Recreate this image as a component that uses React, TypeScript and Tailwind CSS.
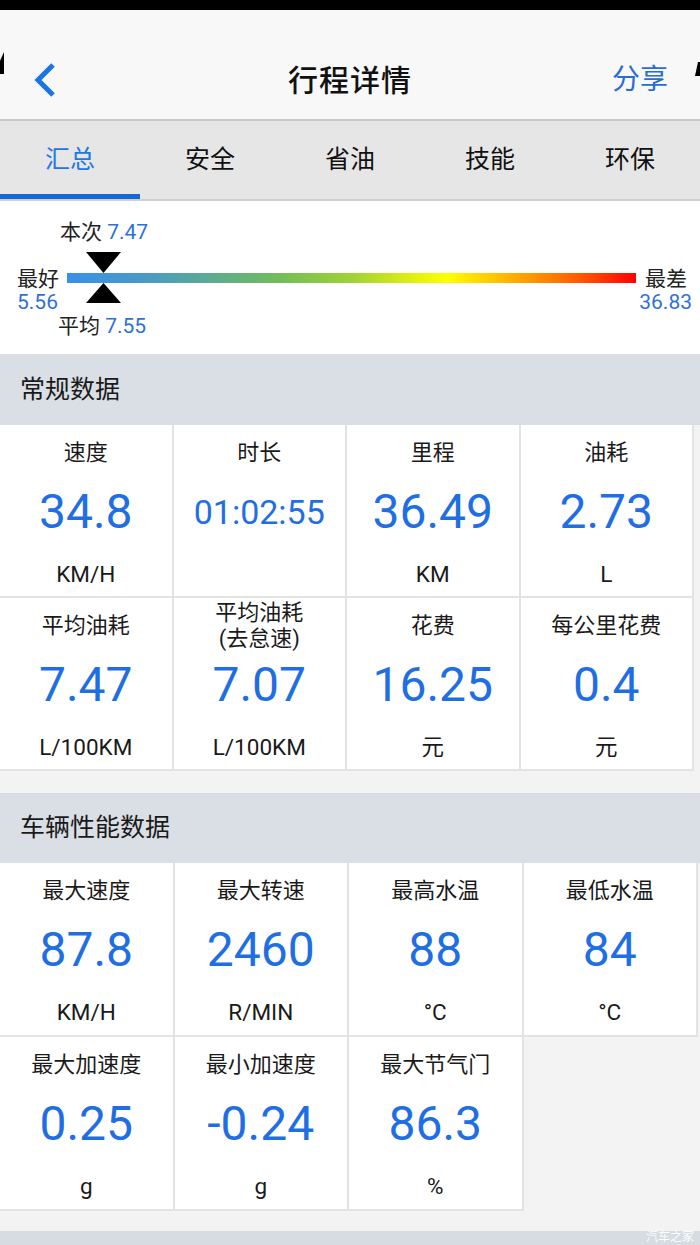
import React from "react";

const FONT = "font-[family-name:Roboto,'Noto_Sans_CJK_SC',sans-serif]";

type CellProps = { label: React.ReactNode; value?: string; unit?: string; small?: boolean; h: string };

function Cell({ label, value, unit, small, h }: CellProps) {
  return (
    <div className={`${h} border-r-2 border-b-2 border-[#e3e3e3] bg-white flex flex-col items-center`}>
      <div className="h-[56px] flex items-center justify-center text-center text-[22px] leading-[26px] text-[#1a1a1a]">
        {label}
      </div>
      <div
        className={`h-[62px] flex items-center justify-center text-[#1f6fe3] ${
          small ? "text-[34px]" : "text-[48px]"
        } leading-none`}
      >
        {value}
      </div>
      <div className="mt-[12px] h-[40px] flex items-center text-[22.5px] text-[#1a1a1a]">{unit}</div>
    </div>
  );
}

function SectionHeader({ title, h }: { title: string; h: string }) {
  return (
    <div className={`${h} bg-[#d9dfe5] flex items-center pl-[20px] text-[25px] text-[#1a1a1a]`}>{title}</div>
  );
}

export default function App() {
  const tabs = ["汇总", "安全", "省油", "技能", "环保"];
  const grid1 = [
    { label: "速度", value: "34.8", unit: "KM/H" },
    { label: "时长", value: "01:02:55", unit: "", small: true },
    { label: "里程", value: "36.49", unit: "KM" },
    { label: "油耗", value: "2.73", unit: "L" },
    { label: "平均油耗", value: "7.47", unit: "L/100KM" },
    {
      label: (
        <span>
          平均油耗
          <br />
          (去怠速)
        </span>
      ),
      value: "7.07",
      unit: "L/100KM",
    },
    { label: "花费", value: "16.25", unit: "元" },
    { label: "每公里花费", value: "0.4", unit: "元" },
  ];
  const grid2 = [
    { label: "最大速度", value: "87.8", unit: "KM/H" },
    { label: "最大转速", value: "2460", unit: "R/MIN" },
    { label: "最高水温", value: "88", unit: "°C" },
    { label: "最低水温", value: "84", unit: "°C" },
    { label: "最大加速度", value: "0.25", unit: "g" },
    { label: "最小加速度", value: "-0.24", unit: "g" },
    { label: "最大节气门", value: "86.3", unit: "%" },
  ];

  return (
    <div className={`${FONT} w-[700px] h-[1245px] overflow-hidden bg-[#f3f3f3] relative`}>
      {/* top black strip */}
      <div className="h-[10px] bg-black" />

      {/* nav header */}
      <div className="relative bg-[#f8f8f8] h-[111px] pt-[40px] border-b-2 border-[#c9c9c9]">
        <div className="absolute left-0 top-[42px] w-[4px] h-[22px] bg-black [clip-path:polygon(0_100%,100%_100%,100%_0,0_40%)]" />
        <div className="absolute right-0 top-[52px] w-[5px] h-[14px] bg-black [clip-path:polygon(0_100%,100%_100%,100%_0,60%_0)]" />
        <div className="h-[60px] flex items-center">
          <div className="w-[150px] pl-[30px] flex items-center">
            <svg width="28" height="36" viewBox="0 0 28 36">
              <path d="M23 3 L8 18 L23 33" fill="none" stroke="#1a74e8" strokeWidth="5" strokeLinecap="butt" />
            </svg>
          </div>
          <div className="flex-1 text-center text-[30px] font-medium text-[#111] tracking-[1px]">行程详情</div>
          <div className="w-[150px] pr-[32px] text-right text-[28px] text-[#2a6bd6]">分享</div>
        </div>
      </div>

      {/* tabs */}
      <div className="h-[80px] bg-[#e6e6e6] border-b-2 border-[#cfcfcf] flex">
        {tabs.map((t, i) => (
          <div key={t} className="w-[140px] flex flex-col">
            <div className="flex-1 pt-[5px] flex items-center justify-center">
              <span className={`text-[25px] ${i === 0 ? "text-[#2277e0]" : "text-[#111]"}`}>{t}</span>
            </div>
            <div className={`h-[5px] ${i === 0 ? "bg-[#1569d6]" : ""}`} />
          </div>
        ))}
      </div>

      {/* gauge */}
      <div className="h-[153px] bg-white text-[21px] leading-[24px] flex flex-col pt-[19px]">
        <div className="pl-[60px] text-[#222]">
          本次 <span className="text-[#2f6fd9]">7.47</span>
        </div>
        <div className="mt-[8px] h-[52px] flex items-start">
          <div className="w-[67px] pl-[17px] pt-[15px] flex flex-col">
            <span className="text-[#222]">最好</span>
            <span className="text-[#2f6fd9] -mt-[1px]">5.56</span>
          </div>
          <div className="w-[569px] flex flex-col">
            <svg className="ml-[19px]" width="35" height="21" viewBox="0 0 35 21">
              <polygon points="0,0 35,0 17.5,21" fill="#000" />
            </svg>
            <div className="h-[10px] bg-[linear-gradient(to_right,#3a8fe8_0%,#4a9cc0_15%,#74bd58_38%,#9fd236_50%,#e8f20e_62%,#ffff00_67%,#ffb000_78%,#ff5a00_90%,#ff0000_100%)]" />
            <svg className="ml-[19px]" width="35" height="20" viewBox="0 0 35 20">
              <polygon points="17.5,0 35,20 0,20" fill="#000" />
            </svg>
          </div>
          <div className="flex-1 pt-[15px] flex flex-col">
            <span className="self-start pl-[9px] text-[#222]">最差</span>
            <span className="self-end pr-[8px] text-[#2f6fd9] -mt-[1px]">36.83</span>
          </div>
        </div>
        <div className="mt-[10px] pl-[58px] text-[#222]">
          平均 <span className="text-[#2f6fd9]">7.55</span>
        </div>
      </div>

      <SectionHeader title="常规数据" h="h-[71px]" />
      <div className="grid grid-cols-4 w-[694px]">
        {grid1.map((c, i) => (
          <Cell key={i} h="h-[173px]" label={c.label} value={c.value} unit={c.unit} small={c.small} />
        ))}
      </div>
      <div className="h-[22px]" />

      <SectionHeader title="车辆性能数据" h="h-[70px]" />
      <div className="grid grid-cols-4 w-[698px]">
        {grid2.map((c, i) => (
          <Cell key={i} h="h-[174px]" label={c.label} value={c.value} unit={c.unit} />
        ))}
      </div>
      <div className="h-[20px]" />
      <div className="relative h-[14px] bg-[#d6dce2]">
        <div className="absolute right-[6px] top-0 text-[12px] leading-[13px] text-white/90">汽车之家</div>
      </div>
    </div>
  );
}
